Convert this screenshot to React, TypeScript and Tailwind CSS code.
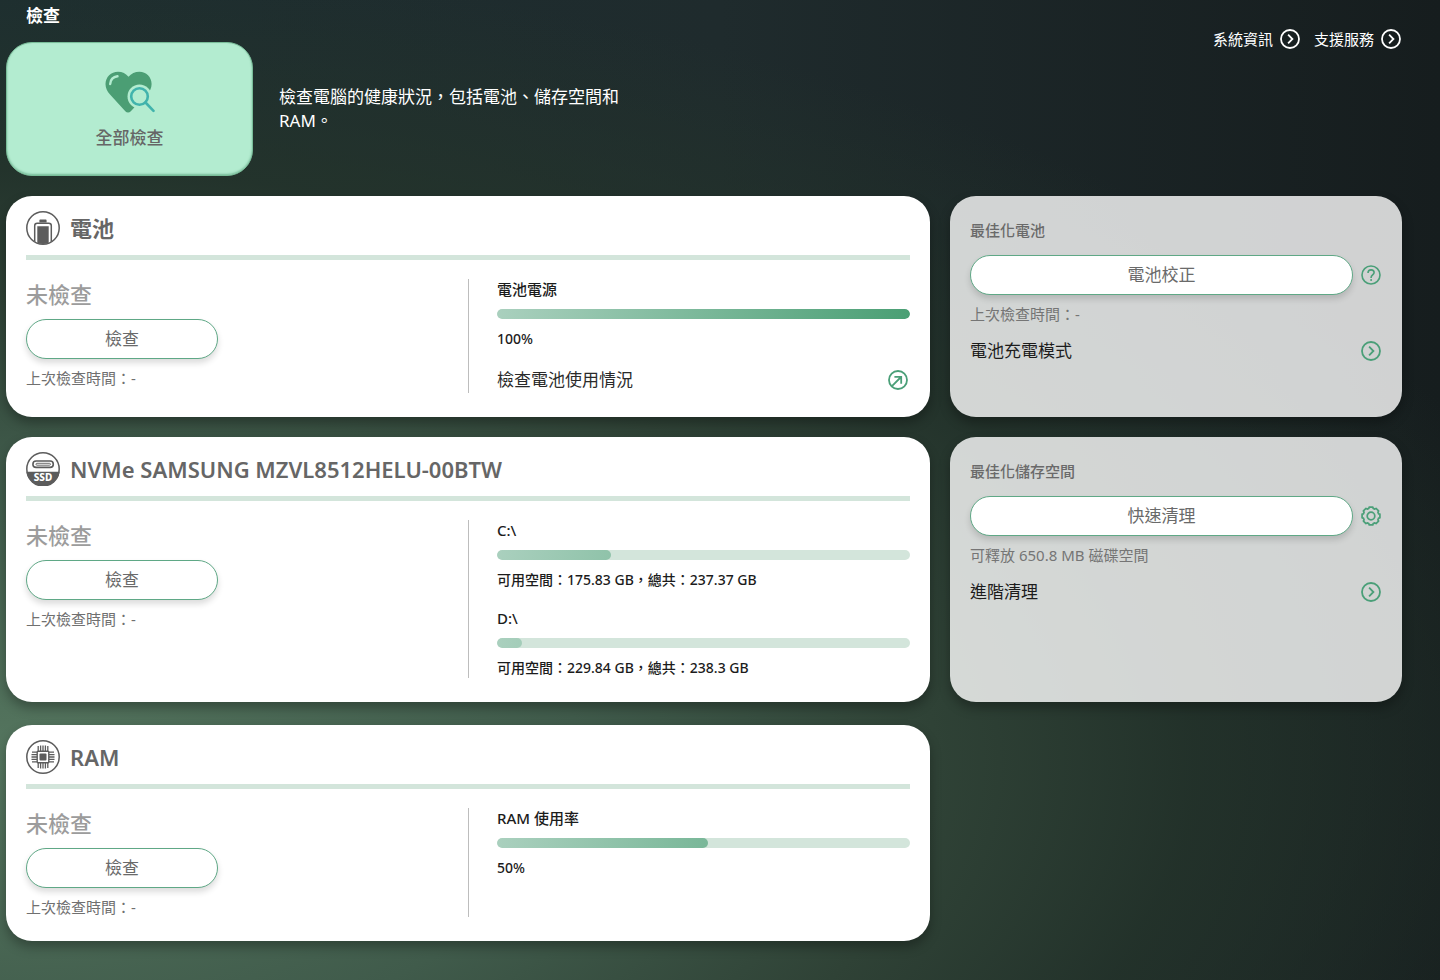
import type { ReactNode } from 'react'

const GREEN = '#4a9f78'

function ChevronCircle({ color = GREEN }: { color?: string }) {
  return (
    <svg viewBox="0 0 20 20" className="size-5 shrink-0" fill="none" stroke={color} strokeWidth="1.8" aria-hidden="true">
      <circle cx="10" cy="10" r="9" />
      <path d="M8.1 5.700 12.400 10l-4.300 4.300" />
    </svg>
  )
}

function ArrowCircle() {
  return (
    <svg viewBox="0 0 20 20" className="size-5 shrink-0" fill="none" stroke={GREEN} strokeWidth="1.8" aria-hidden="true">
      <circle cx="10" cy="10" r="9" />
      <path d="M4.2 15.8 13 7M6.4 6.8h6.8v7" />
    </svg>
  )
}

function HelpCircle() {
  return (
    <svg viewBox="0 0 20 20" className="size-5" fill="none" stroke={GREEN} strokeWidth="1.6" aria-hidden="true">
      <circle cx="10" cy="10" r="9" />
      <path d="M7 7.9c0-1.9 1.3-3 3.1-3s3 1.1 3 2.7c0 2.3-3 2.4-3 4.9v.4" />
      <circle cx="10.1" cy="14.9" r="1" fill={GREEN} stroke="none" />
    </svg>
  )
}

const gearPath = (() => {
  const points: string[] = []
  for (let i = 0; i < 8; i++) {
    const mid = (i * Math.PI) / 4
    const corners: [number, number][] = [
      [-0.28, 7.9],
      [-0.2, 9.1],
      [0.2, 9.1],
      [0.28, 7.9],
    ]
    for (const [offset, r] of corners) {
      points.push(`${(10 + r * Math.cos(mid + offset)).toFixed(2)} ${(10 + r * Math.sin(mid + offset)).toFixed(2)}`)
    }
  }
  return `M${points.join('L')}Z`
})()

function Gear() {
  return (
    <svg viewBox="0 0 20 20" className="size-5" fill="none" stroke={GREEN} strokeWidth="1.7" strokeLinejoin="round" aria-hidden="true">
      <path d={gearPath} />
      <circle cx="10" cy="10" r="3.8" />
    </svg>
  )
}

function HeartSearch() {
  return (
    <svg viewBox="0 0 50 44" className="h-[44px] w-[50px]" fill="none" aria-hidden="true">
      <path
        fill="#4b9e74"
        d="M23.5 6.8C21 3.6 17.300 1.700 13 1.700 6 1.700.5 7 .5 14c0 4 1.700 7.200 4.300 10.200L20.300 41.200c1.500 1.600 4 1.600 5.500 0L42 24c3-3 4.600-6 4.600-10 0-7-5.400-12.300-12.100-12.300-4.500 0-8.300 1.900-11 5.100Z"
      />
      <path d="M5.200 14c.3-4.200 3-7.200 7.300-7.700" stroke="#b3ecd0" strokeWidth="2.400" strokeLinecap="round" />
      <circle cx="34.500" cy="26.500" r="12" fill="#b3ecd0" />
      <path d="m31 36-3 4 6 4 8-3-6-6Z" fill="#b3ecd0" />
      <circle cx="34.500" cy="26.500" r="8.300" stroke="#41b3ac" strokeWidth="2.600" />
      <path d="m40.500 32.500 8 8.300" stroke="#41b3ac" strokeWidth="2.600" strokeLinecap="round" />
    </svg>
  )
}

function BatteryIcon() {
  return (
    <svg viewBox="0 0 34 34" className="size-[34px]" fill="none" aria-hidden="true">
      <clipPath id="battery-ring">
        <circle cx="17" cy="17" r="16" />
      </clipPath>
      <g clipPath="url(#battery-ring)">
        <path d="M13.400 11.500V9.600c0-.6.4-1 1-1h5.200c.6 0 1 .4 1 1v1.900Z" fill="#5c5c5c" />
        <path d="M8.700 36V14.700c0-1.500 1-2.500 2.500-2.500h11.600c1.500 0 2.500 1 2.500 2.500V36" stroke="#5c5c5c" strokeWidth="1.500" />
        <path d="M11.300 15.200h11.400v20H11.300Z" fill="#5c5c5c" />
      </g>
      <circle cx="17" cy="17" r="16.200" stroke="#5c5c5c" strokeWidth="1.500" />
    </svg>
  )
}

function SsdIcon() {
  return (
    <svg viewBox="0 0 34 34" className="size-[34px]" fill="none" aria-hidden="true">
      <path d="M.4 19.800h33.200A16.700 16.700 0 0 1 .4 19.800Z" fill="#5c5c5c" />
      <circle cx="17" cy="17" r="16.200" stroke="#5c5c5c" strokeWidth="1.500" />
      <rect x="6.900" y="9" width="20.400" height="6.400" rx="3.200" stroke="#5c5c5c" strokeWidth="1.600" />
      <rect x="10" y="11.300" width="14.400" height="1.900" rx=".9" stroke="#5c5c5c" strokeWidth=".9" />
      <text x="17" y="29.200" textAnchor="middle" fontSize="10" fontWeight="800" fill="#fff">
        SSD
      </text>
    </svg>
  )
}

function RamIcon() {
  return (
    <svg viewBox="0 0 34 34" className="size-[34px]" fill="none" stroke="#5c5c5c" aria-hidden="true">
      <circle cx="17" cy="17" r="16.200" strokeWidth="1.500" />
      <rect x="11.200" y="11.200" width="11.600" height="11.600" rx="1" strokeWidth="1.400" />
      <rect x="13.500" y="13.500" width="7" height="7" rx="1" fill="#5c5c5c" stroke="none" />
      <path
        strokeWidth="1.300"
        d="M12.200 6v5M14.600 5.500V11M17 5.500V11M19.400 5.500V11M21.800 6v5M12.200 23v5M14.600 23v5.500M17 23v5.500M19.400 23v5.500M21.800 23v5M6 12.200h5M5.500 14.600H11M5.500 17H11M5.500 19.400H11M6 21.800h5M23 12.200h5M23 14.600h5.500M23 17h5.500M23 19.400h5.500M23 21.800h5"
      />
    </svg>
  )
}

function PillButton({ children, className }: { children: ReactNode; className: string }) {
  return (
    <button
      type="button"
      className={`h-10 rounded-full border border-[#5fa886] bg-white text-[17px] text-[#6a6a6a] shadow-[0_4px_6px_rgba(0,0,0,0.14)] ${className}`}
    >
      {children}
    </button>
  )
}

function Usage({ label, percent, detail }: { label: string; percent: number; detail: string }) {
  return (
    <div className="leading-5 font-medium text-[#1c1c1c]">
      <p className="text-[15px]">{label}</p>
      <div
        role="progressbar"
        aria-label={label}
        aria-valuenow={percent}
        aria-valuemin={0}
        aria-valuemax={100}
        className="mt-2.5 h-2.5 overflow-hidden rounded-full bg-[#d3e5db]"
      >
        <div
          className="h-full rounded-full bg-[linear-gradient(100deg,#aad0be,#4a9f74)]"
          style={{ width: `${percent}%`, backgroundSize: `${10000 / percent}% 100%` }}
        />
      </div>
      <p className="mt-2.5 text-[14px]">{detail}</p>
    </div>
  )
}

function DeviceCard({
  icon,
  title,
  className = '',
  children,
}: {
  icon: ReactNode
  title: string
  className?: string
  children: ReactNode
}) {
  return (
    <section className={`rounded-[26px] bg-white px-5 pt-[15px] pb-6 shadow-[0_6px_12px_rgba(0,0,0,0.3)] ${className}`}>
      <header className="flex items-center gap-2.5 border-b-[5px] border-[#d3e5db] pb-2.5">
        {icon}
        <h2 className="text-[22px] leading-[34px] font-semibold text-[#666]">{title}</h2>
      </header>
      <div className="mt-[19px] grid grid-cols-2">
        <div>
          <p className="text-[22px] leading-[30px] font-medium text-[#9c9c9c]">未檢查</p>
          <PillButton className="mt-2.5 w-48">檢查</PillButton>
          <p className="mt-[9px] text-[15px] leading-5 text-[#707070]">上次檢查時間：-</p>
        </div>
        <div className="flex flex-col gap-[18px] border-l border-[#bdbdbd] pl-7">{children}</div>
      </div>
    </section>
  )
}

function OptimizeCard({
  title,
  action,
  tool,
  toolLabel,
  note,
  link,
}: {
  title: string
  action: string
  tool: ReactNode
  toolLabel: string
  note: string
  link: string
}) {
  return (
    <section className="rounded-[26px] bg-[#fff]/80 px-5 pt-6 pb-5 shadow-[0_6px_12px_rgba(0,0,0,0.3)]">
      <h3 className="text-[15px] leading-5 font-medium text-[#6a6a6a]">{title}</h3>
      <div className="mt-[15px] flex items-center gap-2">
        <PillButton className="flex-1">{action}</PillButton>
        <button type="button" aria-label={toolLabel} className="mr-px">
          {tool}
        </button>
      </div>
      <p className="mt-[9px] text-[15px] leading-5 text-[#757575]">{note}</p>
      <a href="#" className="mt-[13px] mr-px flex h-7 items-center justify-between text-[17px] text-[#1c1c1c]">
        {link}
        <ChevronCircle />
      </a>
    </section>
  )
}

export default function App() {
  return (
    <main
      lang="zh-Hant"
      className="min-h-screen bg-[#182022] bg-[radial-gradient(ellipse_112%_82%_at_0%_78%,#55765f_0%,#405b4b_36%,#2f4236_58%,rgba(36,52,43,0.85)_74%,rgba(28,40,38,0)_100%),linear-gradient(90deg,#1d2e30_0%,#1f2b2d_50%,#161d1e_100%)] pr-[38px] pb-9 pl-1.5 font-['Noto_Sans','Noto_Sans_CJK_TC',sans-serif]"
    >
      <header className="flex items-start justify-between">
        <div>
          <h1 className="pt-1 pl-5 text-[17px] leading-6 font-bold text-white">檢查</h1>
          <div className="mt-3.5 flex items-center gap-[26px]">
            <button
              type="button"
              className="flex h-[134px] w-[247px] flex-col items-center justify-center gap-3 rounded-[26px] border border-[#79bd99] bg-[#b3ecd0] pt-0.5 text-[17px] leading-6 font-medium text-[#666] shadow-[inset_0_-1px_2px_rgba(60,140,100,0.5)]"
            >
              <HeartSearch />
              全部檢查
            </button>
            <p className="w-[352px] text-[17px] leading-6 text-white">檢查電腦的健康狀況，包括電池、儲存空間和 RAM。</p>
          </div>
        </div>
        <nav className="mt-[27px] mr-px flex gap-3.5 text-[15px] leading-6 text-white">
          <a href="#" className="flex items-center gap-[7px]">
            系統資訊
            <ChevronCircle color="#ffffff" />
          </a>
          <a href="#" className="flex items-center gap-[7px]">
            支援服務
            <ChevronCircle color="#ffffff" />
          </a>
        </nav>
      </header>

      <div className="mt-5 grid grid-cols-[minmax(0,1fr)_452px] gap-5">
        <DeviceCard icon={<BatteryIcon />} title="電池">
          <Usage label="電池電源" percent={100} detail="100%" />
          <a href="#" className="mr-0.5 flex h-[26px] items-center justify-between text-[17px] text-[#2a2a2a]">
            檢查電池使用情況
            <ArrowCircle />
          </a>
        </DeviceCard>
        <OptimizeCard
          title="最佳化電池"
          action="電池校正"
          tool={<HelpCircle />}
          toolLabel="說明"
          note="上次檢查時間：-"
          link="電池充電模式"
        />
        <DeviceCard icon={<SsdIcon />} title="NVMe SAMSUNG MZVL8512HELU-00BTW">
          <Usage label="C:\" percent={27.6} detail="可用空間：175.83 GB，總共：237.37 GB" />
          <Usage label="D:\" percent={6} detail="可用空間：229.84 GB，總共：238.3 GB" />
        </DeviceCard>
        <OptimizeCard
          title="最佳化儲存空間"
          action="快速清理"
          tool={<Gear />}
          toolLabel="設定"
          note="可釋放 650.8 MB 磁碟空間"
          link="進階清理"
        />
        <DeviceCard icon={<RamIcon />} title="RAM" className="mt-[3px]">
          <Usage label="RAM 使用率" percent={51} detail="50%" />
        </DeviceCard>
      </div>
    </main>
  )
}
